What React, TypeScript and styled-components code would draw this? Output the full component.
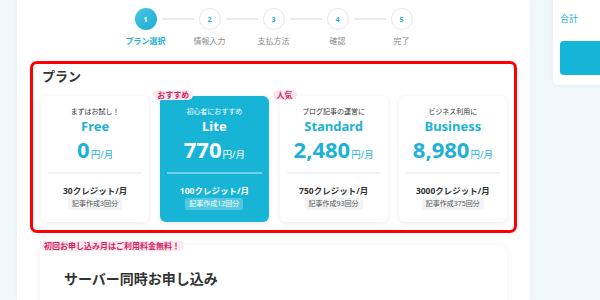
import React from "react";
import styled, { createGlobalStyle, css } from "styled-components";

const BLUE = "#1db1d6";
const PINK = "#d61f63";

const Global = createGlobalStyle`
  html, body { margin: 0; padding: 0; }
  body {
    width: 600px;
    height: 300px;
    overflow: hidden;
    font-family: "Noto Sans", "Noto Sans CJK JP", sans-serif;
    color: #333;
  }
  * { box-sizing: border-box; }
`;

const Page = styled.div`
  display: flex;
  width: 600px;
  height: 300px;
  background: #eff7fa;
  overflow: hidden;
`;

const Gutter = styled.div`
  flex: none;
  width: 17px;
`;

const Main = styled.main`
  flex: none;
  width: 513px;
  background: #fff;
  display: flex;
  flex-direction: column;
  padding-top: 8px;
  box-shadow: 0 0 4px rgba(0, 0, 0, 0.04);
`;

const Stepper = styled.div`
  display: flex;
  flex-direction: column;
  align-items: center;
`;

const StepTrack = styled.div`
  display: flex;
  align-items: center;
`;

const Circle = styled.div<{ $active?: boolean }>`
  width: 22px;
  height: 22px;
  border-radius: 50%;
  display: flex;
  align-items: center;
  justify-content: center;
  font-size: 7px;
  font-weight: 700;
  ${(p) =>
    p.$active
      ? css`
          background: linear-gradient(135deg, #4cc6e2, #1aacd2);
          color: #fff;
        `
      : css`
          background: #fff;
          border: 1px solid #e3e8ea;
          color: ${BLUE};
        `}
`;

const Connector = styled.div`
  width: 32px;
  height: 1.5px;
  margin: 0 5px;
  background: #e8ecee;
`;

const StepLabels = styled.div`
  display: grid;
  grid-template-columns: repeat(5, 64px);
  margin-top: 5px;
`;

const StepLabel = styled.div<{ $active?: boolean }>`
  text-align: center;
  font-size: 8px;
  line-height: 11px;
  color: ${(p) => (p.$active ? BLUE : "#8a8a8a")};
  font-weight: ${(p) => (p.$active ? 700 : 400)};
`;

const PlanSection = styled.section`
  margin: 15px 13px 0 13px;
  border: 3px solid #ff0000;
  border-radius: 7px;
  padding: 4px 7px 8px 8px;
`;

const SectionTitle = styled.h2`
  margin: 0;
  font-size: 13px;
  line-height: 16px;
  font-weight: 700;
  color: #333;
  padding-left: 1px;
`;

const CardGrid = styled.div`
  display: grid;
  grid-template-columns: repeat(4, 1fr);
  gap: 11px;
  margin-top: 12px;
`;

const Card = styled.div<{ $featured?: boolean }>`
  position: relative;
  height: 126px;
  border-radius: 6px;
  padding: 11px 7px 0;
  display: flex;
  flex-direction: column;
  align-items: center;
  background: ${(p) => (p.$featured ? "#17b4d6" : "#fff")};
  color: ${(p) => (p.$featured ? "#fff" : "#333")};
  box-shadow: 0 1px 5px rgba(0, 0, 0, 0.09);
`;

const Badge = styled.span`
  position: absolute;
  top: -6px;
  left: -7px;
  height: 10px;
  padding: 0 4px;
  border-radius: 5px;
  background: #fde8f0;
  color: ${PINK};
  font-size: 8px;
  line-height: 10px;
  font-weight: 700;
  white-space: nowrap;
`;

const Tagline = styled.div`
  font-size: 7px;
  line-height: 10px;
`;

const PlanName = styled.div<{ $featured?: boolean }>`
  margin-top: 1px;
  font-size: 13px;
  line-height: 16px;
  font-weight: 700;
  color: ${(p) => (p.$featured ? "#fff" : BLUE)};
`;

const Price = styled.div<{ $featured?: boolean }>`
  margin-top: 2px;
  height: 26px;
  display: flex;
  align-items: baseline;
  color: ${(p) => (p.$featured ? "#fff" : BLUE)};
`;

const Amount = styled.span`
  font-size: 22px;
  line-height: 26px;
  font-weight: 700;
`;

const Unit = styled.span`
  font-size: 9.5px;
  margin-left: 1px;
`;

const Divider = styled.div<{ $featured?: boolean }>`
  align-self: stretch;
  height: 2px;
  margin-top: 10px;
  background: ${(p) => (p.$featured ? "rgba(255,255,255,0.4)" : "#f0f1f2")};
`;

const Credits = styled.div`
  margin-top: 11px;
  font-size: 8.5px;
  line-height: 11px;
  font-weight: 700;
`;

const Chip = styled.div<{ $featured?: boolean }>`
  margin-top: 2px;
  padding: 0 4px;
  font-size: 7px;
  line-height: 12px;
  border-radius: 2px;
  background: ${(p) => (p.$featured ? "rgba(255,255,255,0.25)" : "#f3f4f5")};
  color: ${(p) => (p.$featured ? "#fff" : "#555")};
`;

const ServerWrap = styled.div`
  position: relative;
  margin: 12px 23px 0 23px;
`;

const ServerCard = styled.div`
  background: #fff;
  border-radius: 8px;
  box-shadow: 0 0 6px rgba(0, 0, 0, 0.07);
  padding: 26px 24px 30px;
`;

const ServerTitle = styled.h3`
  margin: 0;
  font-size: 14px;
  line-height: 16px;
  font-weight: 700;
  color: #333;
`;

const PromoBadge = styled.span`
  position: absolute;
  top: -4px;
  left: 0;
  height: 10px;
  padding: 0 4px;
  border-radius: 5px;
  background: #fde8f0;
  color: ${PINK};
  font-size: 8px;
  line-height: 10px;
  font-weight: 700;
  white-space: nowrap;
`;

const Aside = styled.aside`
  flex: none;
  width: 70px;
  padding-left: 23px;
`;

const SummaryCard = styled.div`
  width: 60px;
  height: 105px;
  margin-top: -20px;
  padding: 33px 0 0 7px;
  background: #fff;
  border-radius: 6px;
  box-shadow: 0 0 5px rgba(0, 0, 0, 0.05);
`;

const SummaryLabel = styled.div`
  font-size: 9px;
  line-height: 12px;
  color: ${BLUE};
`;

const CheckoutButton = styled.div`
  margin-top: 16px;
  height: 34px;
  border-radius: 4px;
  background: #14b5d6;
`;

const steps = ["プラン選択", "情報入力", "支払方法", "確認", "完了"];

type Plan = {
  tagline: string;
  name: string;
  price: string;
  credits: string;
  articles: string;
  badge?: string;
  featured?: boolean;
};

const plans: Plan[] = [
  { tagline: "まずはお試し！", name: "Free", price: "0", credits: "30クレジット/月", articles: "記事作成3回分" },
  {
    tagline: "初心者におすすめ",
    name: "Lite",
    price: "770",
    credits: "100クレジット/月",
    articles: "記事作成12回分",
    badge: "おすすめ",
    featured: true,
  },
  {
    tagline: "ブログ記事の運営に",
    name: "Standard",
    price: "2,480",
    credits: "750クレジット/月",
    articles: "記事作成93回分",
    badge: "人気",
  },
  { tagline: "ビジネス利用に", name: "Business", price: "8,980", credits: "3000クレジット/月", articles: "記事作成375回分" },
];

export default function App() {
  return (
    <>
      <Global />
      <Page>
        <Gutter />
        <Main>
          <Stepper>
            <StepTrack>
              {steps.map((_, i) => (
                <React.Fragment key={i}>
                  {i > 0 && <Connector />}
                  <Circle $active={i === 0}>{i + 1}</Circle>
                </React.Fragment>
              ))}
            </StepTrack>
            <StepLabels>
              {steps.map((s, i) => (
                <StepLabel key={s} $active={i === 0}>
                  {s}
                </StepLabel>
              ))}
            </StepLabels>
          </Stepper>

          <PlanSection>
            <SectionTitle>プラン</SectionTitle>
            <CardGrid>
              {plans.map((p) => (
                <Card key={p.name} $featured={p.featured}>
                  {p.badge && <Badge>{p.badge}</Badge>}
                  <Tagline>{p.tagline}</Tagline>
                  <PlanName $featured={p.featured}>{p.name}</PlanName>
                  <Price $featured={p.featured}>
                    <Amount>{p.price}</Amount>
                    <Unit>円/月</Unit>
                  </Price>
                  <Divider $featured={p.featured} />
                  <Credits>{p.credits}</Credits>
                  <Chip $featured={p.featured}>{p.articles}</Chip>
                </Card>
              ))}
            </CardGrid>
          </PlanSection>

          <ServerWrap>
            <ServerCard>
              <ServerTitle>サーバー同時お申し込み</ServerTitle>
            </ServerCard>
            <PromoBadge>初回お申し込み月はご利用料金無料！</PromoBadge>
          </ServerWrap>
        </Main>
        <Aside>
          <SummaryCard>
            <SummaryLabel>合計</SummaryLabel>
            <CheckoutButton />
          </SummaryCard>
        </Aside>
      </Page>
    </>
  );
}
